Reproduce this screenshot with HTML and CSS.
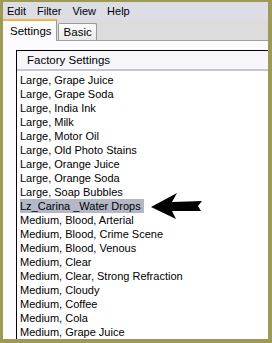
FILE: index.html
```html
<!DOCTYPE html>
<html lang="en">
<head>
    <meta charset="UTF-8">
    <title>Settings</title>
    <link rel="stylesheet" href="styles.css">
</head>
<body>
    <div class="frame">
        <div class="menu-bar">
            <span>Edit</span>
            <span>Filter</span>
            <span>View</span>
            <span>Help</span>
        </div>
        <div class="tab-strip">
            <div class="tab active">Settings</div>
            <div class="tab">Basic</div>
        </div>
        <div class="panel">
            <div class="list-box">
                <div class="list-header">Factory Settings</div>
                <ul class="list-items">
                    <li>Large, Grape Juice</li>
                    <li>Large, Grape Soda</li>
                    <li>Large, India Ink</li>
                    <li>Large, Milk</li>
                    <li>Large, Motor Oil</li>
                    <li>Large, Old Photo Stains</li>
                    <li>Large, Orange Juice</li>
                    <li>Large, Orange Soda</li>
                    <li>Large, Soap Bubbles</li>
                    <li class="selected"><span>Lz_Carina _Water Drops</span></li>
                    <li>Medium, Blood, Arterial</li>
                    <li>Medium, Blood, Crime Scene</li>
                    <li>Medium, Blood, Venous</li>
                    <li>Medium, Clear</li>
                    <li>Medium, Clear, Strong Refraction</li>
                    <li>Medium, Cloudy</li>
                    <li>Medium, Coffee</li>
                    <li>Medium, Cola</li>
                    <li>Medium, Grape Juice</li>
                </ul>
            </div>
        </div>
        <svg class="arrow" width="54" height="28" viewBox="0 0 54 28">
            <polygon points="0,15 26,1 21,10 51,9 47,14 50,19 21,19 25,27" fill="#000"/>
        </svg>
    </div>
</body>
</html>
```

FILE: styles.css
```css
html, body {
    margin: 0;
    padding: 0;
}
body {
    font-family: "Liberation Sans", Arial, sans-serif;
    font-size: 11px;
    color: #000;
}
.frame {
    position: relative;
    width: 265px;
    height: 337px;
    border-style: solid;
    border-color: #9c9a54;
    border-width: 2px 4px 4px 3px;
    background: #fff;
    overflow: hidden;
    display: flex;
    flex-direction: column;
}
.menu-bar {
    height: 19px;
    background: #dddde5;
    display: flex;
    align-items: center;
    gap: 11px;
    padding-left: 4px;
    font-size: 11px;
}
.tab-strip {
    height: 22px;
    background: #dcdcdc;
    border-bottom: 1px solid #9f9f9f;
    display: flex;
    align-items: flex-end;
}
.tab {
    height: 16px;
    padding: 0 4px 0 5px;
    margin-left: 1px;
    background: linear-gradient(#fdfdfd, #e8e8e8);
    border: 1px solid #9a9a9a;
    border-bottom: none;
    border-radius: 2px 2px 0 0;
    line-height: 17px;
    font-size: 11.5px;
}
.tab.active {
    height: 20px;
    margin-left: 0;
    margin-bottom: -1px;
    padding: 0 4px 0 7px;
    background: #fcfcfe;
    border-color: #9a9a9a;
    border-top: 2px solid #f2b440;
    border-left: none;
    border-radius: 0;
    line-height: 20px;
}
.panel {
    flex: 1;
    background: #fcfcfe;
    padding: 9px 0 0 13px;
}
.list-box {
    height: 100%;
    border-top: 1px solid #000;
    border-left: 1px solid #000;
    background: #fff;
}
.list-header {
    height: 18px;
    line-height: 18px;
    padding-left: 10px;
    background: #f7f7fb;
    border-bottom: 2px solid #c6c6cc;
    font-size: 11.5px;
}
.list-items {
    list-style: none;
    margin: 0;
    padding: 2px 0 0 3px;
}
.list-items li {
    height: 14px;
    line-height: 14px;
    white-space: nowrap;
}
.list-items li.selected span {
    display: inline-block;
    background: #b4b8c6;
    padding-right: 3px;
}
.arrow {
    position: absolute;
    left: 148px;
    top: 190px;
}
```
